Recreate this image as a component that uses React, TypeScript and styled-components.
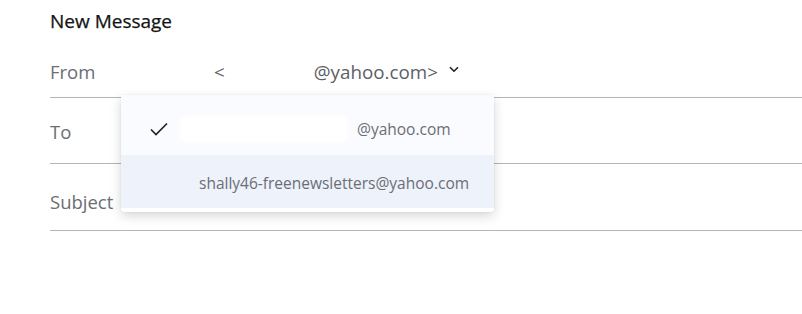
import React from "react";
import styled, { createGlobalStyle } from "styled-components";

const Global = createGlobalStyle`
  html, body { margin: 0; padding: 0; background: #ffffff; }
  body { font-family: "Open Sans", "Noto Sans", "Liberation Sans", sans-serif; }
`;

const Page = styled.div`
  position: relative;
  width: 802px;
  height: 314px;
  padding-left: 50px;
  box-sizing: border-box;
  overflow: hidden;
`;

const Title = styled.div`
  height: 46px;
  padding-top: 8px;
  box-sizing: border-box;
  font-size: 19px;
  line-height: 26px;
  font-weight: 500;
  color: #141414;
  -webkit-text-stroke: 0.25px #141414;
`;

const Row = styled.div<{ $h: number; $pt: number }>`
  display: flex;
  align-items: center;
  height: ${(p) => p.$h}px;
  padding-top: ${(p) => p.$pt}px;
  border-bottom: 1px solid #b4b4b4;
  box-sizing: border-box;
`;

const Label = styled.div`
  width: 164px;
  font-size: 18.5px;
  color: #6b6e72;
`;

const Sender = styled.div`
  display: flex;
  align-items: center;
  font-size: 18.8px;
  color: #5d6065;
`;

const Blank = styled.span`
  display: inline-block;
  width: 89px;
`;

const Chevron = styled.svg`
  margin-left: 11px;
  margin-top: -4px;
`;

const Menu = styled.div`
  position: absolute;
  left: 121px;
  top: 95px;
  width: 373px;
  padding-bottom: 4px;
  background: #ffffff;
  border-radius: 3px;
  box-shadow: 0 4px 12px rgba(0, 0, 0, 0.16), 0 0 2px rgba(0, 0, 0, 0.08);
`;

const Item = styled.div<{ $h: number; $bg: string; $pt: number }>`
  display: flex;
  align-items: center;
  height: ${(p) => p.$h}px;
  padding-top: ${(p) => p.$pt}px;
  box-sizing: border-box;
  background: ${(p) => p.$bg};
  font-size: 15.5px;
  color: #6b6e76;
`;

const Check = styled.div`
  width: 78px;
  padding-left: 28px;
  box-sizing: border-box;
  display: flex;
  align-items: center;
`;

const Redact = styled.span`
  display: inline-block;
  width: 170px;
  height: 28px;
  margin-left: -20px;
  margin-right: 8px;
  background: #ffffff;
  border-radius: 10px;
  filter: blur(2px);
`;

const Indent = styled.span`
  margin-left: 78px;
`;

export default function App() {
  return (
    <>
      <Global />
      <Page>
        <Title>New Message</Title>
        <Row $h={52} $pt={0}>
          <Label>From</Label>
          <Sender>
            &lt;<Blank />@yahoo.com&gt;
            <Chevron width="10" height="7" viewBox="0 0 10 7">
              <path d="M1 1.2 L5 5.2 L9 1.2" fill="none" stroke="#1f1f1f" strokeWidth="1.6" />
            </Chevron>
          </Sender>
        </Row>
        <Row $h={66} $pt={2}>
          <Label>To</Label>
        </Row>
        <Row $h={67} $pt={8}>
          <Label>Subject</Label>
        </Row>
        <Menu>
          <Item $h={60} $pt={8} $bg="#fafbfe">
            <Check>
              <svg width="20" height="16" viewBox="0 0 20 16">
                <path d="M2 8.5 L7 13.5 L18 2.5" fill="none" stroke="#222" strokeWidth="1.7" />
              </svg>
            </Check>
            <Redact />
            <span>@yahoo.com</span>
          </Item>
          <Item $h={53} $pt={2} $bg="#eef2fb">
            <Indent>shally46-freenewsletters@yahoo.com</Indent>
          </Item>
        </Menu>
      </Page>
    </>
  );
}
